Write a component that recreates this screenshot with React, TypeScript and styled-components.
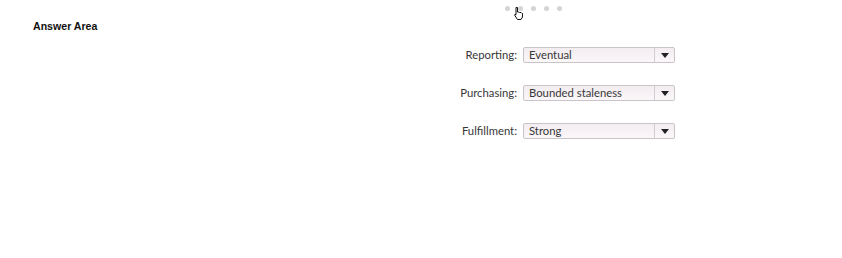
import React from 'react';
import styled, { createGlobalStyle } from 'styled-components';

const GlobalStyle = createGlobalStyle`
  html, body {
    margin: 0;
    padding: 0;
    background: #ffffff;
  }
  body {
    font-family: Lato, 'Noto Sans', sans-serif;
    color: #222;
  }
`;

const Page = styled.div`
  position: relative;
  width: 842px;
  height: 258px;
  display: flex;
  flex-direction: column;
`;

const Dots = styled.div`
  display: flex;
  gap: 8px;
  margin: 6px 0 0 505px;
`;

const Dot = styled.span`
  width: 5px;
  height: 5px;
  border-radius: 50%;
  background: #d4d4d4;
`;

const Title = styled.h1`
  margin: 8px 0 0 33px;
  font-family: 'Liberation Sans', Arial, sans-serif;
  font-size: 10.6px;
  font-weight: bold;
  color: #111;
  line-height: 14px;
`;

const Form = styled.div`
  display: grid;
  grid-template-columns: 77px 152px;
  column-gap: 6px;
  row-gap: 22px;
  align-items: center;
  margin: 14px 0 0 440px;
`;

const Label = styled.label`
  text-align: right;
  font-size: 11.3px;
  color: #383838;
  line-height: 16px;
`;

const Select = styled.div`
  display: flex;
  height: 16px;
  box-sizing: border-box;
  border: 1px solid #c9c4c8;
  border-radius: 2px;
  background: linear-gradient(#f3ecf1, #faf7f9);
  font-size: 11.3px;
  color: #383838;
`;

const Value = styled.span`
  flex: 1;
  padding-left: 5px;
  line-height: 14px;
  white-space: nowrap;
`;

const Arrow = styled.span`
  width: 19px;
  border-left: 1px solid #d2cdd1;
  display: flex;
  align-items: center;
  justify-content: center;

  &::after {
    content: '';
    border-left: 4px solid transparent;
    border-right: 4px solid transparent;
    border-top: 5px solid #222;
  }
`;

const Cursor = styled.svg`
  position: absolute;
  left: 513px;
  top: 6px;
`;

const rows = [
  { label: 'Reporting:', value: 'Eventual' },
  { label: 'Purchasing:', value: 'Bounded staleness' },
  { label: 'Fulfillment:', value: 'Strong' },
];

const App: React.FC = () => (
  <Page>
    <GlobalStyle />
    <Dots>
      {[0, 1, 2, 3, 4].map((i) => (
        <Dot key={i} />
      ))}
    </Dots>
    <Title>Answer Area</Title>
    <Form>
      {rows.map((r) => (
        <React.Fragment key={r.label}>
          <Label>{r.label}</Label>
          <Select>
            <Value>{r.value}</Value>
            <Arrow />
          </Select>
        </React.Fragment>
      ))}
    </Form>
    <Cursor width="11" height="15" viewBox="0 0 11 15">
      <path
        d="M3 1.5 L4.5 1.5 L4.5 6 L6 6 L6.5 6.5 L8 6.5 L8.5 7 L9.5 7.5 L9.5 11 L8 13.5 L4.5 13.5 L1.5 9 L2 8.3 L3 8.8 Z"
        fill="#fff"
        stroke="#111"
        strokeWidth="1"
        strokeLinejoin="round"
      />
    </Cursor>
  </Page>
);

export default App;
